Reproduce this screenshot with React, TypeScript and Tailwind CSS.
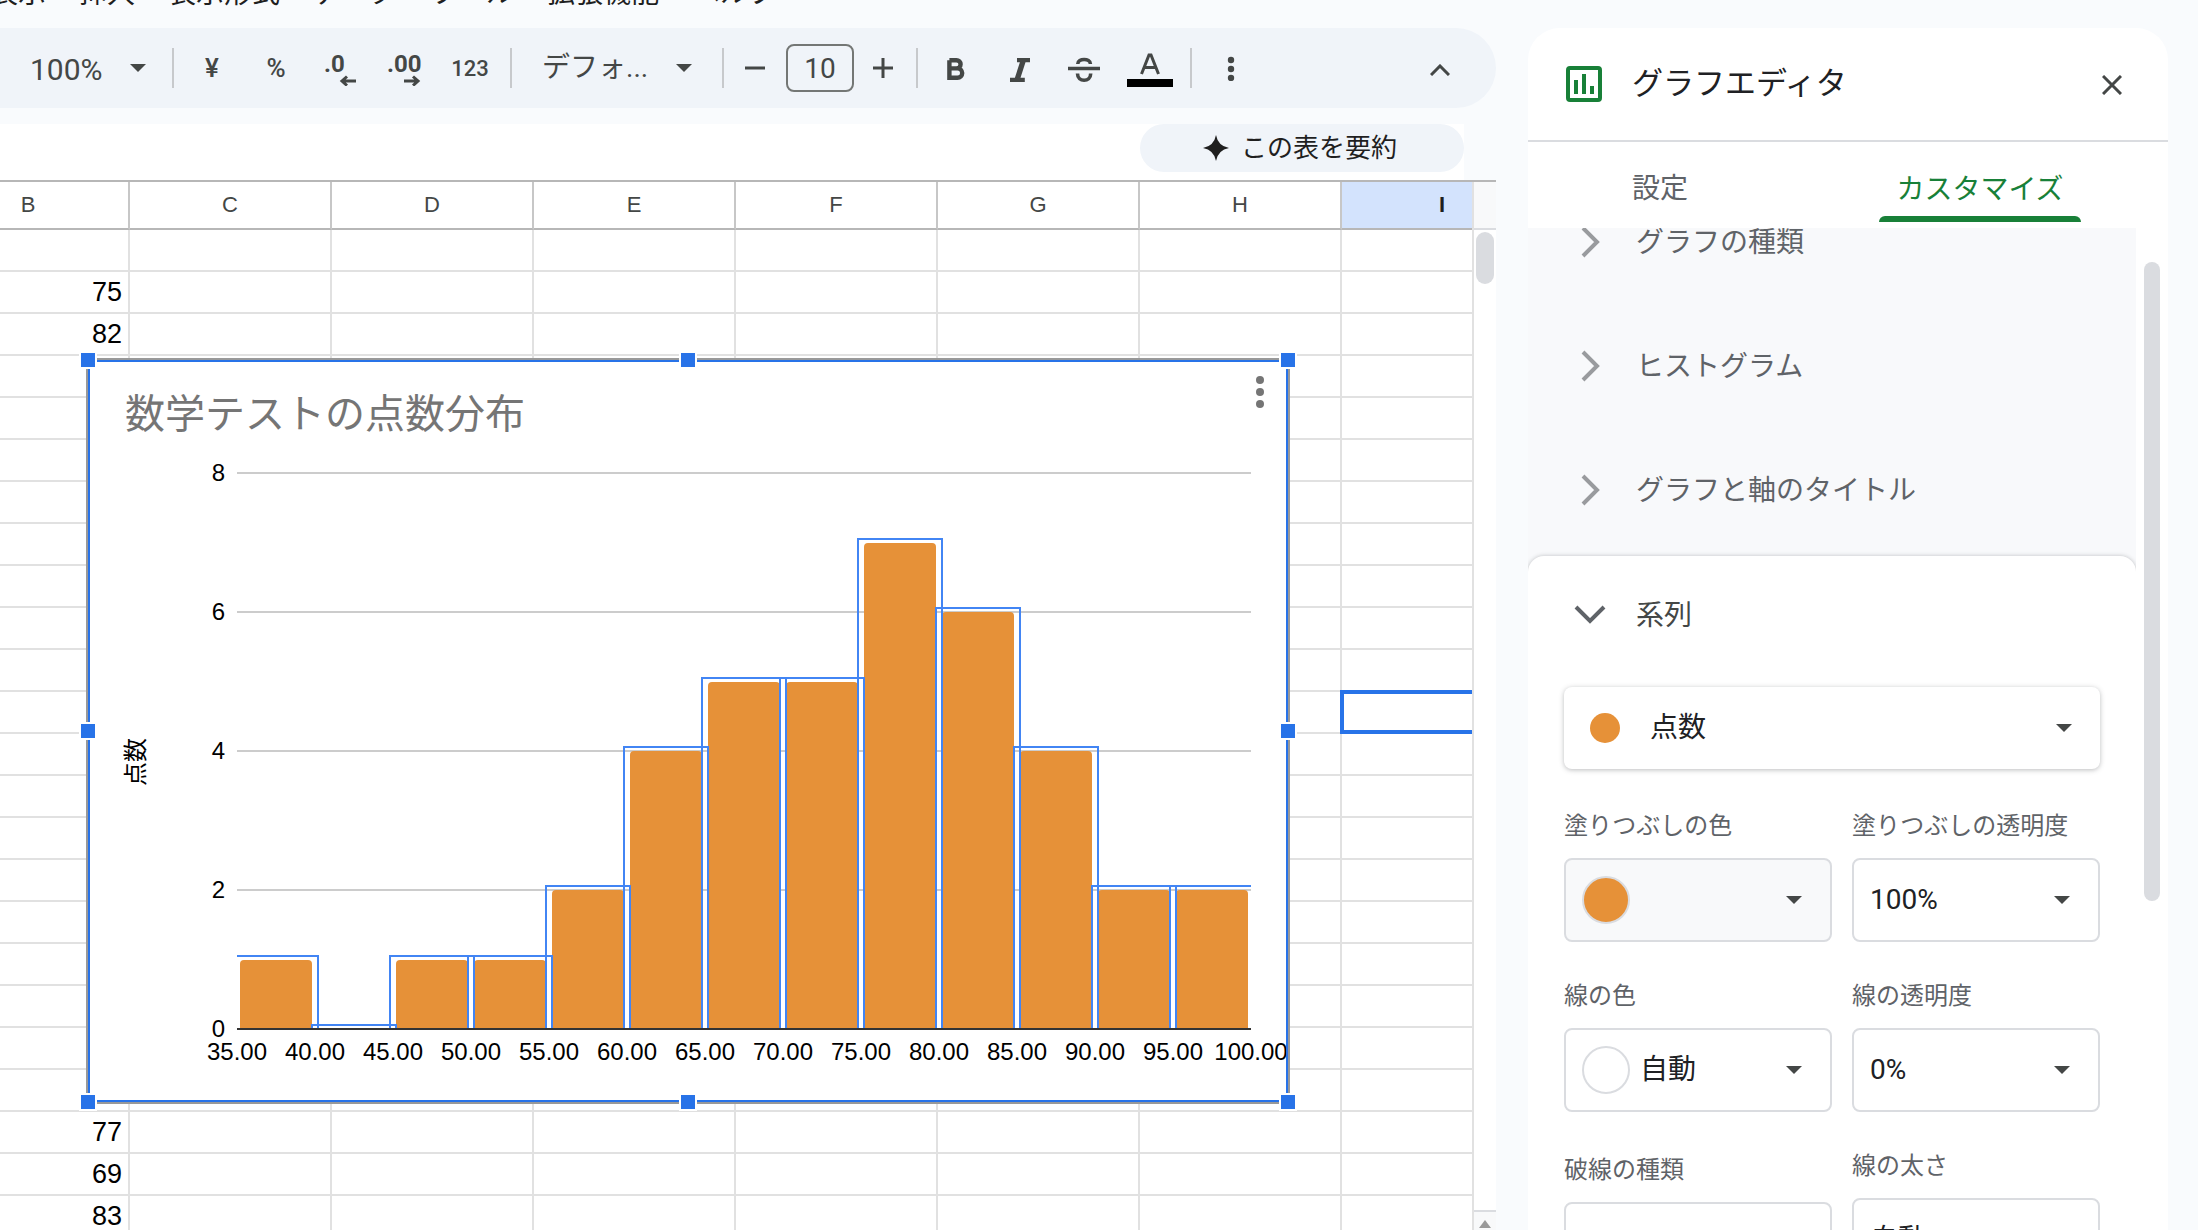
import { useState } from "react";
import type { ReactNode } from "react";

const MENUS = ["表示", "挿入", "表示形式", "データ", "ツール", "拡張機能", "ヘルプ"];
const COLUMNS = ["B", "C", "D", "E", "F", "G", "H", "I"];
const ROW_COUNT = 24;
const SELECTED_ROW = 11;

// column B scores, keyed by visible row index
const SCORES: Record<number, string> = { 1: "75", 2: "82", 21: "77", 22: "69", 23: "83" };

const COUNTS = [1, 0, 1, 1, 2, 4, 5, 5, 7, 6, 4, 2, 2];
const BIN_START = 35;
const BIN_SIZE = 5;

const PLOT = { left: 151, right: 1165, base: 671, bin: 78 };
const yFor = (v: number) => Math.round(PLOT.base - v * 69.5);

function Caret({ className = "" }: { className?: string }) {
    return (
        <svg viewBox="0 0 16 8" className={`pointer-events-none h-2 w-4 fill-[#444746] ${className}`} aria-hidden="true">
            <path d="M0 0h16L8 8z" />
        </svg>
    );
}

function Separator({ className = "" }: { className?: string }) {
    return <div className={`h-10 w-0.5 shrink-0 bg-[#c7c9cc] ${className}`} />;
}

function ToolButton({ label, children }: { label: string; children: ReactNode }) {
    return (
        <button type="button" aria-label={label} className="flex h-14 w-16 shrink-0 items-center justify-center">
            {children}
        </button>
    );
}

function DecimalIcon({ digits, increase }: { digits: string; increase?: boolean }) {
    return (
        <svg viewBox="0 0 36 36" className="size-9 fill-[#444746]" aria-hidden="true">
            <text x={increase ? 1 : 2} y="22" fontSize="24" fontWeight="700">{digits}</text>
            <path
                d={increase ? "M18 31h14M27 26.5l5 4.5-5 4.5" : "M34 31H20M25 26.5L20 31l5 4.5"}
                fill="none"
                stroke="#444746"
                strokeWidth="3"
            />
        </svg>
    );
}

function Toolbar() {
    const [fontSize, setFontSize] = useState(10);

    return (
        <div className="flex h-20 items-center rounded-r-full bg-[#f0f4f9] pl-[30px] text-[#444746]">
            <div className="relative flex w-[116px] shrink-0 items-center">
                <select aria-label="ズーム" className="h-14 w-full appearance-none pt-0.5 text-[30px] outline-none">
                    <option>100%</option>
                </select>
                <Caret className="absolute right-0" />
            </div>
            <Separator className="mr-1.5 ml-[26px]" />
            <ToolButton label="通貨"><span className="text-[26px] font-medium">¥</span></ToolButton>
            <ToolButton label="パーセント"><span className="text-[26px] font-medium">%</span></ToolButton>
            <ToolButton label="小数点以下の桁数を減らす"><DecimalIcon digits=".0" /></ToolButton>
            <ToolButton label="小数点以下の桁数を増やす"><DecimalIcon digits=".00" increase /></ToolButton>
            <ToolButton label="表示形式の詳細"><span className="pl-1 text-[22px] font-medium">123</span></ToolButton>
            <Separator className="ml-2.5" />
            <div className="relative ml-[30px] flex w-[150px] shrink-0 items-center">
                <select aria-label="フォント" className="h-14 w-full appearance-none text-[28px] outline-none">
                    <option>デフォ...</option>
                </select>
                <Caret className="absolute right-0" />
            </div>
            <Separator className="ml-[30px]" />
            <button type="button" aria-label="縮小" onClick={() => setFontSize(fontSize - 1)} className="ml-[15px] flex h-12 w-8 shrink-0 items-center justify-center">
                <svg viewBox="0 0 20 20" className="size-5" stroke="currentColor" strokeWidth="3"><path d="M0 10h20" /></svg>
            </button>
            <input
                aria-label="フォントサイズ"
                value={fontSize}
                onChange={(e) => setFontSize(Number(e.target.value) || 0)}
                className="ml-[15px] h-12 w-[68px] shrink-0 rounded-lg border-2 border-[#747775] text-center text-[28px] outline-none"
            />
            <button type="button" aria-label="拡大" onClick={() => setFontSize(fontSize + 1)} className="ml-[13px] flex h-12 w-8 shrink-0 items-center justify-center">
                <svg viewBox="0 0 20 20" className="size-5" stroke="currentColor" strokeWidth="3"><path d="M0 10h20M10 0v20" /></svg>
            </button>
            <Separator className="mr-1.5 ml-[17px]" />
            <ToolButton label="太字">
                <svg viewBox="0 0 32 32" className="size-8" fill="none" stroke="currentColor" strokeWidth="4.4">
                    <path d="M9.4 8.2V25.8H17.5A4.6 4.6 0 0 0 17.5 16.4H9.4M16.5 16.4A4.1 4.1 0 0 0 16.5 8.2H9.4" />
                </svg>
            </ToolButton>
            <ToolButton label="斜体">
                <svg viewBox="0 0 32 32" className="size-8 fill-current"><path d="M13 6h13v4.2h-4.5l-5 15.6h4.300V30H6v-4.2h4.900l5-15.600H13z" /></svg>
            </ToolButton>
            <ToolButton label="取り消し線">
                <svg viewBox="0 0 32 32" className="size-8" fill="none" stroke="currentColor" strokeWidth="3.6">
                    <path d="M0 16.5h32M9.800 12c0-6 12.600-6 12.600 0M9.500 21.500c0 9 13.200 9 13.200 0" />
                </svg>
            </ToolButton>
            <ToolButton label="テキストの色">
                <span className="flex flex-col items-center gap-1 pt-1 pl-1">
                    <svg viewBox="0 0 20 22" className="h-[22px] w-5" fill="none" stroke="currentColor" strokeWidth="3">
                        <path d="M1.500 21L9 2h2l7.500 19M4.500 14.500h11" />
                    </svg>
                    <span className="h-2 w-[46px] bg-black" />
                </span>
            </ToolButton>
            <Separator className="mr-[7px] ml-2.5" />
            <ToolButton label="その他">
                <svg viewBox="0 0 8 26" className="h-[26px] w-2 fill-current">
                    <circle cx="4" cy="5" r="3.200" /><circle cx="4" cy="14" r="3.200" /><circle cx="4" cy="23" r="3.200" />
                </svg>
            </ToolButton>
            <button type="button" aria-label="メニューを非表示" className="mr-10 ml-auto flex h-12 w-8 items-center justify-center pt-1">
                <svg viewBox="0 0 20 12" className="h-3 w-5" fill="none" stroke="currentColor" strokeWidth="3"><path d="M1 11l9-9 9 9" /></svg>
            </button>
        </div>
    );
}

function Histogram() {
    const ticks = [8, 6, 4, 2];
    const labels = [...COUNTS, 0].map((_, i) => (BIN_START + i * BIN_SIZE).toFixed(2));

    return (
        <svg viewBox="0 0 1204 746" className="h-[746px] w-[1204px] font-['Liberation_Sans','Noto_Sans_CJK_JP',sans-serif]" role="img" aria-label="数学テストの点数分布">
            <defs>
                <clipPath id="plot"><rect x={PLOT.left} y="100" width={PLOT.right - PLOT.left} height="570" /></clipPath>
            </defs>
            <text x="39" y="70" fontSize="40" fill="#757575">数学テストの点数分布</text>
            <text x="58" y="404" fontSize="24" textAnchor="middle" transform="rotate(-90 58 404)">点数</text>
            {ticks.map((t) => (
                <rect key={t} x={PLOT.left} y={yFor(t) - 1} width={PLOT.right - PLOT.left} height="2" fill="#cccccc" />
            ))}
            {[...ticks, 0].map((t) => (
                <text key={t} x="139" y={yFor(t) + 8} fontSize="24" textAnchor="end">{t}</text>
            ))}
            {COUNTS.map((c, i) => {
                const x = PLOT.left + i * PLOT.bin + 3;
                const y = yFor(c);
                if (!c) return null;
                return <path key={i} d={`M${x} ${PLOT.base}V${y + 4}q0-4 4-4h64q4 0 4 4V${PLOT.base}z`} fill="#e69138" />;
            })}
            <g clipPath="url(#plot)" fill="none" stroke="#4285f4" strokeWidth="2">
                {COUNTS.map((c, i) => (
                    <rect key={i} x={PLOT.left + i * PLOT.bin - 3} y={yFor(c) - 4} width={PLOT.bin + 6} height={c * 70 + 20} />
                ))}
            </g>
            <rect x={PLOT.left} y={PLOT.base - 1} width={PLOT.right - PLOT.left} height="2" fill="#333333" />
            {labels.map((l, i) => (
                <text key={l} x={PLOT.left + i * PLOT.bin} y="702" fontSize="24" textAnchor="middle">{l}</text>
            ))}
            <g fill="#757575">
                <circle cx="1174" cy="22" r="4" /><circle cx="1174" cy="34" r="4" /><circle cx="1174" cy="46" r="4" />
            </g>
        </svg>
    );
}

const HANDLES = [
    "-left-[7px] -top-[7px]",
    "left-1/2 -ml-[9px] -top-[7px]",
    "-right-[7px] -top-[7px]",
    "-left-[7px] top-1/2 -mt-[9px]",
    "-right-[7px] top-1/2 -mt-[9px]",
    "-left-[7px] -bottom-[7px]",
    "left-1/2 -ml-[9px] -bottom-[7px]",
    "-right-[7px] -bottom-[7px]",
];

function Sheet() {
    return (
        <div className="flex min-h-0 flex-1 border-t-2 border-[#b7b7b7] bg-white">
            <div className="relative min-w-0 flex-1 overflow-hidden border-r-2 border-[#e1e1e1]">
                <table className="-ml-[72px] w-[1616px] table-fixed border-separate border-spacing-0 font-['Liberation_Sans',sans-serif]">
                    <thead>
                        <tr className="h-12">
                            {COLUMNS.map((c) => (
                                <th
                                    key={c}
                                    className={`border-r-2 border-b-2 border-r-[#c7c7c7] border-b-[#b7b7b7] p-0 pb-0.5 text-[22px] ${c === "I" ? "bg-[#d3e3fd] font-bold text-[#1f1f1f]" : "font-normal text-[#444746]"}`}
                                >
                                    {c}
                                </th>
                            ))}
                        </tr>
                    </thead>
                    <tbody>
                        {Array.from({ length: ROW_COUNT }, (_, r) => (
                            <tr key={r} className="h-[42px]">
                                {COLUMNS.map((c) => (
                                    <td key={c} className="relative border-r-2 border-b-2 border-[#e1e1e1] py-0 pr-1.5 pl-0 text-right text-[27px] leading-10 text-black">
                                        {c === "B" ? SCORES[r] : null}
                                        {c === "I" && r === SELECTED_ROW && (
                                            <span className="absolute -top-0.5 right-0 -bottom-0.5 -left-0.5 border-4 border-[#2873e8]" />
                                        )}
                                    </td>
                                ))}
                            </tr>
                        ))}
                    </tbody>
                </table>

                {/* floating chart, selected */}
                <div className="absolute top-[176px] left-[86px] bg-white">
                    <Histogram />
                    <div className="absolute inset-0 border-2 border-[#999999]" />
                    <div className="absolute inset-0.5 border-2 border-[#2873e8]" />
                    {HANDLES.map((h) => (
                        <span key={h} className={`absolute size-[18px] border-2 border-white bg-[#2873e8] ${h}`} />
                    ))}
                </div>
            </div>
            <div className="flex w-[22px] shrink-0 flex-col items-center">
                <div className="h-12 w-full border-b-2 border-[#dadce0] bg-[#f8f9fa]" />
                <div className="mt-0.5 h-[52px] w-[18px] rounded-full bg-[#dadce0]" />
                <div className="mt-auto flex h-5 w-full items-end justify-center border-t-2 border-[#dadce0] bg-[#f8f9fa] pb-0.5">
                    <svg viewBox="0 0 12 8" className="h-2 w-3 fill-[#999999]"><path d="M6 0l6 8H0z" /></svg>
                </div>
            </div>
        </div>
    );
}

function Field({ id, label, value, swatch, className = "" }: { id: string; label: string; value: string; swatch?: string; className?: string }) {
    return (
        <div className={`flex flex-col gap-4 ${className}`}>
            <label htmlFor={id} className="text-2xl leading-8 text-[#5f6368]">{label}</label>
            <div className="relative flex items-center">
                <select
                    id={id}
                    className={`h-[84px] w-full appearance-none rounded-lg border-2 border-[#dadce0] text-[28px] text-[#202124] outline-none ${swatch ? "pl-[74px]" : "pl-4"} ${value ? "bg-white" : "bg-[#f8f9fa]"}`}
                >
                    <option>{value}</option>
                </select>
                {swatch && <span className={`pointer-events-none absolute left-[18px] size-12 rounded-full border-2 border-[#dadce0] ${swatch}`} />}
                <Caret className="absolute right-[30px]" />
            </div>
        </div>
    );
}

function ChartEditor() {
    const closed = ["グラフの種類", "ヒストグラム", "グラフと軸のタイトル"];

    return (
        <aside className="mt-7 mr-[30px] ml-8 flex w-[640px] shrink-0 flex-col overflow-hidden rounded-t-[32px] bg-white">
            <header className="flex h-[114px] shrink-0 items-center border-b-2 border-[#dadce0] pr-11 pl-[38px]">
                <svg viewBox="0 0 36 36" className="size-9" fill="none" stroke="#188038" strokeWidth="4">
                    <rect x="2" y="2" width="32" height="32" rx="2" />
                    <path d="M10 14v14M18 8v20M26 20v8" />
                </svg>
                <h2 className="ml-[30px] text-[31px] leading-10 text-[#202124]">グラフエディタ</h2>
                <button type="button" aria-label="閉じる" className="ml-auto p-0.5 pt-1 text-[#444746]">
                    <svg viewBox="0 0 20 20" className="size-5" stroke="currentColor" strokeWidth="3"><path d="M1 1l18 18M19 1L1 19" /></svg>
                </button>
            </header>
            <div role="tablist" className="flex h-[86px] shrink-0 pb-1.5 text-[28px]">
                <button type="button" role="tab" aria-selected="false" className="w-[264px] pt-3.5 text-[#5f6368]">設定</button>
                <button type="button" role="tab" aria-selected="true" className="ml-[87px] flex w-[202px] flex-col items-center justify-between pt-7 leading-10 text-[#188038]">
                    カスタマイズ
                    <span className="h-1.5 w-full rounded-t-md bg-[#188038]" />
                </button>
            </div>
            <div className="flex min-h-0 flex-1 overflow-hidden">
                <div className="min-w-0 flex-1 overflow-hidden bg-[#f8f9fb]">
                    <div className="-mt-12 pb-1">
                        {closed.map((title) => (
                            <button key={title} type="button" className="flex h-[124px] w-full items-center pl-[53px] text-[28px] text-[#5f6368]">
                                <svg viewBox="0 0 20 32" className="h-8 w-5" fill="none" stroke="#999b9e" strokeWidth="4"><path d="M2 2l14 14L2 30" /></svg>
                                <span className="ml-[35px] pt-0.5">{title}</span>
                            </button>
                        ))}
                    </div>
                    <section className="rounded-t-2xl bg-white px-9 shadow-[0_0_4px_rgba(60,64,67,0.3)]">
                        <button type="button" className="flex h-[116px] w-full items-center pt-0.5 pl-2.5 text-[28px] text-[#444746]">
                            <svg viewBox="0 0 32 20" className="h-5 w-8" fill="none" stroke="#5f6368" strokeWidth="4"><path d="M2 2l14 14L30 2" /></svg>
                            <span className="ml-[30px] pt-0.5">系列</span>
                        </button>
                        <div className="relative mt-[15px] flex items-center">
                            <select aria-label="系列を選択" className="h-[82px] w-full appearance-none rounded-lg bg-white pl-[86px] text-[28px] text-[#202124] shadow-[0_1px_5px_rgba(60,64,67,0.35)] outline-none">
                                <option>点数</option>
                            </select>
                            <span className="pointer-events-none absolute left-[26px] size-[30px] rounded-full bg-[#e69138]" />
                            <Caret className="absolute right-7" />
                        </div>
                        <div className="mt-[41px] flex gap-5">
                            <div className="flex w-[268px] flex-col gap-[38px]">
                                <Field id="fill" label="塗りつぶしの色" value="" swatch="bg-[#e69138]" />
                                <Field id="stroke" label="線の色" value="自動" swatch="bg-white" />
                                <Field id="dash" label="破線の種類" value="" className="mt-1 [&_select]:bg-white" />
                            </div>
                            <div className="flex flex-1 flex-col gap-[38px]">
                                <Field id="fill-opacity" label="塗りつぶしの透明度" value="100%" />
                                <Field id="stroke-opacity" label="線の透明度" value="0%" />
                                <Field id="stroke-width" label="線の太さ" value="自動" />
                            </div>
                        </div>
                    </section>
                </div>
                <div className="w-8 shrink-0 pt-[34px] pl-2">
                    <div className="h-[639px] w-4 rounded-full bg-[#dadce0]" />
                </div>
            </div>
        </aside>
    );
}

export default function App() {
    return (
        <div className="flex h-screen overflow-hidden bg-[#f9fbfd] font-['Roboto','Noto_Sans_CJK_JP',sans-serif]">
            <main className="flex min-w-0 flex-1 flex-col">
                <nav className="-ml-2.5 flex h-7 shrink-0 items-end gap-[33px] overflow-hidden pb-5 text-[28px] leading-7 text-[#1f1f1f]">
                    {MENUS.map((m) => (
                        <button key={m} type="button" className="shrink-0">{m}</button>
                    ))}
                </nav>
                <Toolbar />
                <div className="mt-4 mr-8 flex h-14 shrink-0 items-start justify-end bg-white">
                    <button type="button" className="flex h-12 w-[324px] items-center justify-center gap-3 rounded-full bg-[#f0f4f9] pr-1 text-[26px] text-[#1f1f1f]">
                        <svg viewBox="0 0 26 26" className="size-[26px] fill-current"><path d="M13 0q2 11 13 13q-11 2-13 13q-2-11-13-13q11-2 13-13z" /></svg>
                        この表を要約
                    </button>
                </div>
                <Sheet />
            </main>
            <ChartEditor />
        </div>
    );
}
